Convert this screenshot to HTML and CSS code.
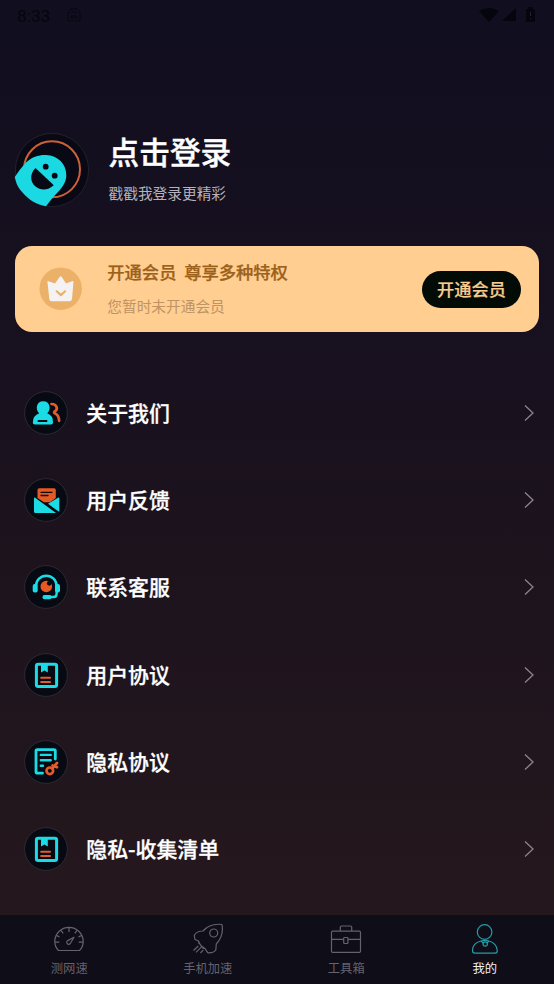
FILE: index.html
```html
<!DOCTYPE html>
<html lang="zh-CN">
<head>
<meta charset="utf-8">
<title>我的</title>
<link rel="stylesheet" href="styles.css">
</head>
<body>
<div class="screen">
  <header class="status">
    <span class="time">8:33</span>
    <svg class="status-app" width="14" height="14" viewBox="0 0 14 14" fill="none" stroke="currentColor"><path d="M3 1h7l3 3v9H1V6z M4 5l2-2 1 2 3-1M4 8h6v2H4z"/></svg>
    <svg class="status-icons" width="58" height="18" viewBox="0 0 58 18" fill="currentColor"><path d="M0 5Q10-1 20 5L10 16Z"/><path d="M37 2v13H23Z"/><path d="M47 3h2V1h5v2h2v13h-9z"/><path d="M51 6h1v4h-1zM51 12h1v1h-1z" fill="#252132"/></svg>
  </header>

  <section class="profile">
    <svg class="avatar" width="76" height="76" viewBox="0 0 76 76">
      <circle cx="38" cy="38" r="36.6" fill="#080914" stroke="#29242f" stroke-width=".8"/>
      <circle cx="38" cy="37.3" r="28" fill="none" stroke="#ce6038" stroke-width="2"/>
      <path d="M.8 45Q6 37 11.5 31C18 24.5 25 22.8 32 23C44 23.5 52.3 32 52.3 43C52.3 50 49 54.5 44 60Q39 65 32 74.2C23 73 15 68 9 61C4 56 2 51 .8 45Z" fill="#1bd9e3"/>
      <path d="M21.5 36L39.8 53.3C34 58.5 27 59 21.5 54.5C16 50 15.5 42 21.5 36Z" fill="#080914"/>
      <circle cx="31.7" cy="34.7" r="2.9" fill="#080914"/><circle cx="40.7" cy="43.7" r="2.9" fill="#080914"/>
    </svg>
    <div class="profile-text">
      <h1>点击登录</h1>
      <p>戳戳我登录更精彩</p>
    </div>
  </section>

  <section class="vip">
    <svg class="crown" width="44" height="44" viewBox="0 0 44 44">
      <circle cx="21.7" cy="21.7" r="21.2" fill="#ebb169"/>
      <path d="M8.5 15.2Q8 13.8 9.5 14.2L16 16.5L20.6 10Q21.7 8.6 22.8 10L27 16.5L33 14.2Q34.8 13.8 34.4 15.5L33 32Q32.7 34.3 30.5 34.3H12.7Q10.5 34.3 10.3 32Z" fill="#f5f2f3"/>
      <path d="M17.7 24.3l4.2 3.8 4.2-3.8" fill="none" stroke="#ebb169" stroke-width="2.2" stroke-linecap="round" stroke-linejoin="round"/>
    </svg>
    <div class="vip-text">
      <h2>开通会员&nbsp; 尊享多种特权</h2>
      <p>您暂时未开通会员</p>
    </div>
    <button class="vip-button">开通会员</button>
  </section>

  <main class="menu">
    <a class="row">
      <svg class="row-icon" viewBox="0 0 44 44"><circle class="disc" cx="22" cy="22" r="21.4"/>
        <path class="line orange bold" d="M27.5 13C33 13 34.5 18.5 30.6 20.5Q29.4 21.4 31 22.4Q35 24 35.1 29.8"/>
        <path class="cyan" d="M15.2 22.3C11 18.5 12.3 10.2 19.2 10.2S27.5 18.5 23.2 22.3Q29.2 24.5 29 31.5Q29 33.5 27 33.5H10.8Q8.8 33.5 8.8 31.5Q9 24.5 15.2 22.3Z"/>
        <path class="line dark" d="M14.5 29.9H22.5"/></svg>
      <span>关于我们</span><svg class="arrow" viewBox="0 0 10 18"><path d="M1 1.5L9 9L1 16.5"/></svg>
    </a>
    <a class="row">
      <svg class="row-icon" viewBox="0 0 44 44"><circle class="disc" cx="22" cy="22" r="21.4"/>
        <path class="red" d="M13.5 12Q13.5 10.2 15.3 10.2H30Q31.8 10.2 31.8 12V20L26 24.2H20L13.5 20Z"/>
        <path class="line dark thin" d="M17 14.3H28M17 17.5H24"/>
        <path class="cyan" d="M10 20.2Q10 19 11.2 19.8L32 35H11.5Q10 35 10 33.5Z"/>
        <path class="cyan" d="M24 25.8L34 19.8Q35.3 19 35.3 20.5V33Q35.3 34 34.2 33.3Z"/></svg>
      <span>用户反馈</span><svg class="arrow" viewBox="0 0 10 18"><path d="M1 1.5L9 9L1 16.5"/></svg>
    </a>
    <a class="row">
      <svg class="row-icon" viewBox="0 0 44 44"><circle class="disc" cx="22" cy="22" r="21.4"/>
        <path class="line cyan-line" d="M12 21A10.3 10.3 0 0 1 32.6 21V29Q32.6 32 29.5 32H22"/>
        <rect class="cyan" x="8.7" y="19" width="5" height="8.5" rx="2"/><rect class="cyan" x="31" y="19" width="5" height="8.5" rx="2"/>
        <rect class="cyan" x="18.5" y="30" width="9" height="4.3" rx="2"/>
        <circle class="red" cx="22.3" cy="21.5" r="5.8"/><circle cx="25.3" cy="18.3" r="2.4" fill="#080a13"/></svg>
      <span>联系客服</span><svg class="arrow" viewBox="0 0 10 18"><path d="M1 1.5L9 9L1 16.5"/></svg>
    </a>
    <a class="row">
      <svg class="row-icon" viewBox="0 0 44 44"><circle class="disc" cx="22" cy="22" r="21.4"/>
        <rect class="line cyan-line book" x="12.4" y="11.2" width="20.2" height="22.3" rx="1.8"/>
        <path class="cyan" d="M17 10H23.8V19.5L20.4 17.4L17 19.5Z"/>
        <path class="line orange" d="M17.2 24.7H26M17.2 29H26"/></svg>
      <span>用户协议</span><svg class="arrow" viewBox="0 0 10 18"><path d="M1 1.5L9 9L1 16.5"/></svg>
    </a>
    <a class="row">
      <svg class="row-icon" viewBox="0 0 44 44"><circle class="disc" cx="22" cy="22" r="21.4"/>
        <path class="line cyan-line page" d="M31.3 19V11Q31.3 9.6 30 9.6H13.3Q12 9.6 12 11V31.8Q12 33.2 13.3 33.2H18.5"/>
        <path class="line cyan-line" d="M16.8 14.9H26.7M16.8 20.2H26.7M16.8 25.8H19"/>
        <circle class="line orange bold" cx="25.8" cy="30.8" r="3.3"/><path class="line orange bold" d="M28.2 28.3L33 23M30.4 26L33 27.2M28.6 25.5L30 27"/></svg>
      <span>隐私协议</span><svg class="arrow" viewBox="0 0 10 18"><path d="M1 1.5L9 9L1 16.5"/></svg>
    </a>
    <a class="row">
      <svg class="row-icon" viewBox="0 0 44 44"><circle class="disc" cx="22" cy="22" r="21.4"/>
        <rect class="line cyan-line book" x="12.4" y="11.2" width="20.2" height="22.3" rx="1.8"/>
        <path class="cyan" d="M17 10H23.8V19.5L20.4 17.4L17 19.5Z"/>
        <path class="line orange" d="M17.2 24.7H26M17.2 29H26"/></svg>
      <span>隐私-收集清单</span><svg class="arrow" viewBox="0 0 10 18"><path d="M1 1.5L9 9L1 16.5"/></svg>
    </a>
  </main>

  <nav class="tabs">
    <a class="tab">
      <svg viewBox="0 0 32 32"><path d="M5.5 28.5Q1.8 25 1.8 19.5A14 14 0 0 1 30.2 19.5Q30.2 25 26.5 28.5ZM16 6v4M8.2 8.6l2 2.8M23.8 8.6l-2 2.8M3.5 13.5l3 1.4M28.5 13.5l-3 1.4M2 20.2h4.3M30 20.2h-4.3M21 15.2l-5.8 3.2a2 2 0 1 0 2.4 2.6z"/></svg>
      <span>测网速</span>
    </a>
    <a class="tab">
      <svg viewBox="0 0 32 32"><path d="M30 2.5Q18 1 11 9Q4.5 9 2.2 13.5L3 17.5L6.5 19Q8 24 13 26.5L14.5 29L16 30.8Q22 31 23.8 28L24.3 22Q32 14 30 2.5ZM6.3 24L1.5 28.5M9.5 24.8L4 30.3M11.3 27.8L8.5 31M6.5 19l.5 3M13 26.5h-2.5"/><circle cx="21.7" cy="11" r="4"/></svg>
      <span>手机加速</span>
    </a>
    <a class="tab">
      <svg viewBox="0 0 32 32"><rect x="1.5" y="9.2" width="29" height="21.2" rx="1.2"/><path d="M10.3 9V5.3Q10.3 4 11.5 4H20.5Q21.7 4 21.7 5.3V9M1.5 17.3H13.5M18 17.3H30.5"/><rect x="13.7" y="15.5" width="4.2" height="6" rx=".8"/></svg>
      <span>工具箱</span>
    </a>
    <a class="tab active">
      <svg viewBox="0 0 32 32"><circle cx="15.6" cy="10" r="7.3"/><path d="M12 19Q3.5 21 3.5 28.5Q3.5 31.2 6 31.2H26Q28.3 31.2 28.3 28.5Q27.5 21 20 19Q16 17.7 12 19L14.2 21.2M20 19L18 21.2"/><circle cx="16.2" cy="22" r="2.2"/></svg>
      <span>我的</span>
    </a>
  </nav>
</div>
</body>
</html>
```
FILE: styles.css
```css
* { box-sizing: border-box; }
body { margin: 0; }
h1, h2, p { margin: 0; }

.screen {
  width: 554px;
  height: 984px;
  display: flex;
  flex-direction: column;
  overflow: hidden;
  color: #fff;
  font-family: "Noto Sans CJK SC", sans-serif;
  background: linear-gradient(#110e20 0, #19111e 42%, #25181d 93%);
}

.status {
  height: 32px;
  display: flex;
  align-items: center;
  padding: 0 17px;
  color: #05050d;
}
.time { font: 17.3px/32px Roboto, sans-serif; width: 50px; }
.status-app { opacity: .75; margin-top: -2px; }
.status-icons { margin: -2px 0 0 auto; }

.profile {
  height: 76px;
  margin: 100px 14px 0;
  display: flex;
  gap: 18.5px;
}
.profile-text { display: flex; flex-direction: column; }
.profile h1 { margin-top: -1px; font-size: 30.7px; font-weight: 500; line-height: 40px; -webkit-text-stroke: .4px; }
.profile p { margin-top: 10px; font-size: 14.7px; line-height: 24px; color: #b6b2bb; }

.vip {
  height: 86px;
  flex: none;
  margin: 38px 15px 0;
  padding: 0 18px 0 24px;
  display: flex;
  align-items: center;
  border-radius: 17px;
  background: #ffce90;
}
.vip-text { margin: -1px 0 0 24.3px; }
.vip h2 { font-size: 17.3px; font-weight: 500; line-height: 26px; color: #9b611b; white-space: nowrap; -webkit-text-stroke: .25px; }
.vip p { margin-top: 9px; font-size: 14.7px; line-height: 24px; color: #be9464; }
.vip-button {
  margin-left: auto;
  width: 99px;
  height: 37px;
  padding: 0;
  border: 0;
  border-radius: 19px;
  background: #030b06;
  color: #f8cb8e;
  font: 500 17.2px/36px "Noto Sans CJK SC", sans-serif;
  -webkit-text-stroke: .2px;
}

.menu { flex: 1; padding: 37px 19.7px 0 24px; }
.row { height: 87.35px; display: flex; align-items: center; }
.row span { margin: -2px 0 0 18.3px; font-size: 20.9px; font-weight: 500; line-height: 30px; -webkit-text-stroke: .3px; }
.row-icon { width: 44px; height: 44px; }
.disc { fill: #080a13; stroke: #343039; stroke-width: .8; }
.cyan { fill: #1bdce5; }
.red { fill: #e65922; }
.line { fill: none; stroke-width: 2.4; stroke-linecap: round; stroke-linejoin: round; }
.orange { stroke: #e35c2b; stroke-width: 2.1; }
.bold { stroke-width: 2.7; }
.cyan-line { stroke: #1bdce5; }
.book { stroke-width: 3; }
.page { stroke-width: 2.8; }
.dark { stroke: #080a13; stroke-width: 2; }
.thin { stroke-width: 1.3; }
.arrow { width: 10px; height: 18px; margin-left: auto; fill: none; stroke: #8b858b; stroke-width: 1.3; }

.tabs {
  height: 69px;
  flex: none;
  display: grid;
  grid-template-columns: repeat(4, 1fr);
  background: #0e0d18;
}
.tab {
  display: flex;
  flex-direction: column;
  align-items: center;
  padding-top: 7px;
  color: #65626d;
  font-size: 12.3px;
  line-height: 20px;
}
.tab svg { width: 32px; height: 32px; margin-bottom: 4px; fill: none; stroke: #65626f; stroke-width: 1.2; stroke-linejoin: round; }
.tab.active { color: #f2f2f5; }
.tab.active svg { stroke: #249ca6; }
```
